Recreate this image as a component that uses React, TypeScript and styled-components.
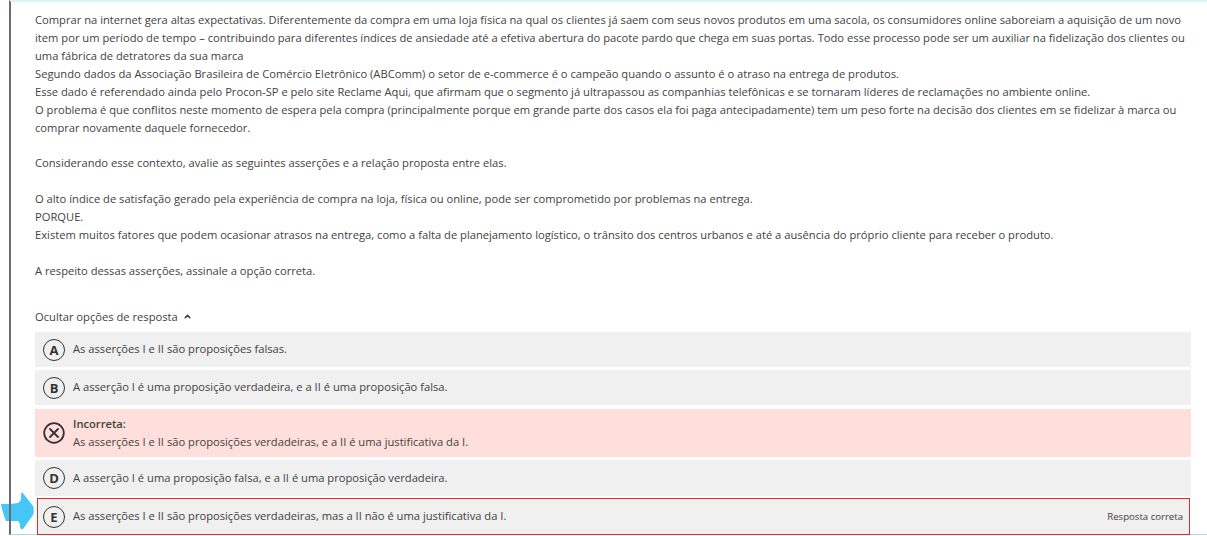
import React from 'react';
import styled, { createGlobalStyle } from 'styled-components';
import { ChevronUp } from 'lucide-react';

const Global = createGlobalStyle`
  html, body {
    margin: 0;
    padding: 0;
    background: #fff;
  }
  body {
    font-family: "Open Sans", sans-serif;
    font-size: 11.18px;
    color: #424242;
    overflow: hidden;
  }
`;

const Page = styled.div`
  position: relative;
  width: 1207px;
  height: 536px;
  overflow: hidden;
  padding-left: 9px;
  box-sizing: border-box;
`;

const Card = styled.main`
  position: relative;
  z-index: 1;
  width: 1198px;
  height: 535px;
  box-sizing: border-box;
  border-top: 2px solid #d8f6f8;
  border-left: 2px solid #6b6b6b;
  border-bottom: 1px solid #b7d8d8;
  padding: 9px 16px 0 24px;
`;

const Statement = styled.div`
  line-height: 18px;
  width: 1156px;
`;

const Para = styled.p`
  margin: 0 0 18px;

  &:first-child {
    margin-bottom: 17px;
  }
`;

const Toggle = styled.div`
  display: flex;
  align-items: center;
  gap: 5px;
  margin-top: 27px;
  height: 18px;
`;

const Options = styled.div`
  display: flex;
  flex-direction: column;
  gap: 3px;
  margin-top: 7px;
`;

const Option = styled.div<{ $tall?: boolean }>`
  display: flex;
  flex: none;
  align-items: center;
  box-sizing: border-box;
  height: ${(p) => (p.$tall ? '36px' : '35px')};
  padding: 0 8px;
  background: #f0f0f0;
`;

const WrongOption = styled(Option)`
  height: 48px;
  margin-top: 1px;
  background: #ffdfdc;
`;

const Marked = styled(Option)`
  height: 37px;
  margin: -1px 1px 0 2px;
  padding: 0 6px 0 5px;
  border: 1px solid #e02b2b;
`;

const Letter = styled.span`
  flex: none;
  width: 22px;
  height: 22px;
  box-sizing: border-box;
  border: 1.5px solid #333;
  border-radius: 50%;
  margin-right: 8px;
  display: flex;
  align-items: center;
  justify-content: center;
  font-weight: 700;
  font-size: 13px;
  color: #333;
`;

const WrongIcon = styled.svg`
  flex: none;
  width: 22px;
  height: 22px;
  margin-right: 8px;
`;

const Label = styled.span`
  flex: 1;
  padding-bottom: 2px;
`;

const WrongText = styled.div`
  flex: 1;
  line-height: 18px;
`;

const Title = styled.div`
  font-weight: 600;
`;

const Correct = styled.span`
  font-size: 9.6px;
`;

const Pointer = styled.svg`
  position: absolute;
  z-index: 0;
  left: 0;
  top: 491px;
  width: 34px;
  height: 40px;
`;

const App = () => {
  return (
    <Page>
      <Global />
      <Pointer viewBox="0 0 34 40">
        <path
          d="M1 13c6 0 13 0 17-1 2-1 3-3 3-5 0-3 0-5 1-6l11 14c1 2 1 7 0 9L23 38c-2 1-3-1-3-3 0-3-1-5-3-5H6C4 25 2 19 1 13z"
          fill="#44c6f6"
        />
      </Pointer>
      <Card>
        <Statement>
          <Para>
            Comprar na internet gera altas expectativas. Diferentemente da compra em uma loja física na qual os clientes já saem com seus novos produtos em uma sacola, os consumidores online saboreiam a aquisição de um novo item por um período de tempo – contribuindo para diferentes índices de ansiedade até a efetiva abertura do pacote pardo que chega em suas portas. Todo esse processo pode ser um auxiliar na fidelização dos clientes ou uma fábrica de detratores da sua marca
            <br />
            Segundo dados da Associação Brasileira de Comércio Eletrônico (ABComm) o setor de e-commerce é o campeão quando o assunto é o atraso na entrega de produtos.
            <br />
            Esse dado é referendado ainda pelo Procon-SP e pelo site Reclame Aqui, que afirmam que o segmento já ultrapassou as companhias telefônicas e se tornaram líderes de reclamações no ambiente online.
            <br />
            O problema é que conflitos neste momento de espera pela compra (principalmente porque em grande parte dos casos ela foi paga antecipadamente) tem um peso forte na decisão dos clientes em se fidelizar à marca ou comprar novamente daquele fornecedor.
          </Para>
          <Para>Considerando esse contexto, avalie as seguintes asserções e a relação proposta entre elas.</Para>
          <Para>
            O alto índice de satisfação gerado pela experiência de compra na loja, física ou online, pode ser comprometido por problemas na entrega.
            <br />
            PORQUE.
            <br />
            Existem muitos fatores que podem ocasionar atrasos na entrega, como a falta de planejamento logístico, o trânsito dos centros urbanos e até a ausência do próprio cliente para receber o produto.
          </Para>
          <Para>A respeito dessas asserções, assinale a opção correta.</Para>
        </Statement>
        <Toggle>
          Ocultar opções de resposta
          <ChevronUp size={9} strokeWidth={4} />
        </Toggle>
        <Options>
          <Option>
            <Letter>A</Letter>
            <Label>As asserções I e II são proposições falsas.</Label>
          </Option>
          <Option>
            <Letter>B</Letter>
            <Label>A asserção I é uma proposição verdadeira, e a II é uma proposição falsa.</Label>
          </Option>
          <WrongOption>
            <WrongIcon viewBox="0 0 22 22" fill="none" stroke="#333" strokeWidth="1.8">
              <circle cx="11" cy="11" r="9.8" />
              <path d="M7 7l8 8M15 7l-8 8" strokeLinecap="round" />
            </WrongIcon>
            <WrongText>
              <Title>Incorreta:</Title>
              As asserções I e II são proposições verdadeiras, e a II é uma justificativa da I.
            </WrongText>
          </WrongOption>
          <Option $tall>
            <Letter>D</Letter>
            <Label>A asserção I é uma proposição falsa, e a II é uma proposição verdadeira.</Label>
          </Option>
          <Marked>
            <Letter>E</Letter>
            <Label>As asserções I e II são proposições verdadeiras, mas a II não é uma justificativa da I.</Label>
            <Correct>Resposta correta</Correct>
          </Marked>
        </Options>
      </Card>
    </Page>
  );
};

export default App;
